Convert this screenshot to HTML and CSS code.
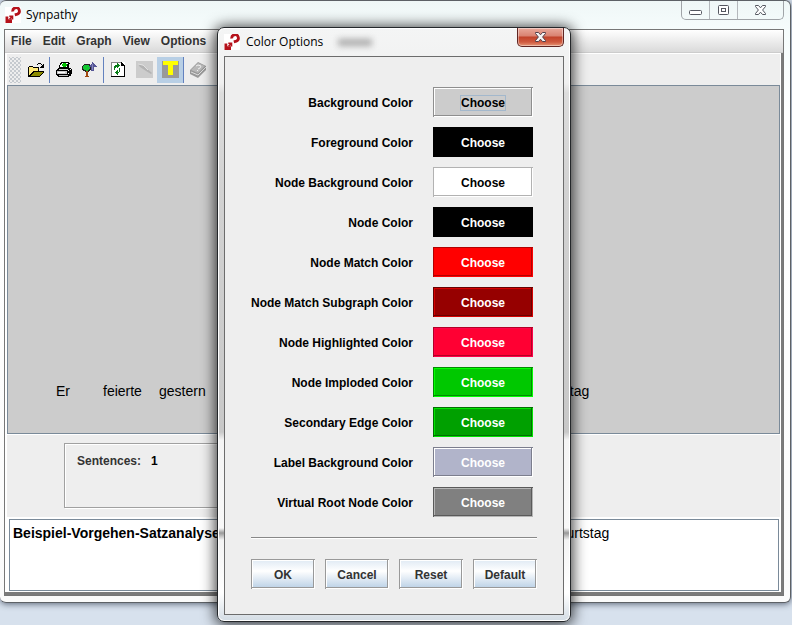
FILE: index.html
```html
<!DOCTYPE html>
<html lang="en">
<head>
<meta charset="utf-8">
<title>Synpathy</title>
<link rel="stylesheet" href="styles.css">
</head>
<body>
<svg class="defs" width="0" height="0" aria-hidden="true">
  <symbol id="logo" viewBox="0 0 16 16">
    <rect width="16" height="16" fill="#fff"/>
    <path d="M7.800 4.500 A3.300 3.300 0 1 1 12.300 7.100 L9.800 7.800" fill="none" stroke="#b5121b" stroke-width="2.800"/>
    <path d="M0.500 9.500h2.800v2.800h3.700v3.700H0.500z" fill="#b5121b"/>
    <path d="M4.300 8.500h4v4h-1.500v-1.300l-1.600 1.600-1.200-1.200 1.600-1.600h-1.300z" fill="#b5121b"/>
  </symbol>
</svg>
<div class="desktop">
  <main class="window">
    <header class="titlebar">
      <svg class="logo" width="16" height="16" aria-hidden="true"><use href="#logo"/></svg>
      <h1 class="title">Synpathy</h1>
      <div class="controls">
        <button class="control" type="button" aria-label="Minimize"><svg width="13" height="12"><rect x="0.500" y="6.500" width="12" height="4" rx="1" fill="#fff" stroke="#53565f"/></svg></button>
        <button class="control" type="button" aria-label="Maximize"><svg width="13" height="12"><rect x="1.500" y="1.500" width="10" height="9" rx="1" fill="#fff" stroke="#53565f"/><rect x="4.500" y="4.500" width="4" height="3" fill="#fff" stroke="#53565f"/></svg></button>
        <button class="control control-close" type="button" aria-label="Close"><svg width="13" height="12"><path d="M1.500 1.500h3l2 2.300 2-2.300h3v1L8.600 6l2.900 3.500v1h-3l-2-2.300-2 2.300h-3v-1L4.400 6 1.500 2.500z" fill="#fff" stroke="#53565f"/></svg></button>
      </div>
    </header>
    <div class="frame">
      <nav class="menubar">
        <button type="button">File</button>
        <button type="button">Edit</button>
        <button type="button">Graph</button>
        <button type="button">View</button>
        <button type="button">Options</button>
      </nav>
      <div class="client">
        <div class="toolbar">
          <span class="grip"></span>
          <button class="tool" type="button" aria-label="Open">
            <svg width="18" height="16" shape-rendering="crispEdges">
              <path d="M1 15V5h1V4h4v1h6v4h5v1l-5 5z" fill="#000"/>
              <path d="M2 13V5h4v1h5v3H6L3 13z" fill="#ffe97a"/>
              <path d="M7 10h9l-4 4H3z" fill="#8b8b00"/>
              <path d="M10 3V2h1V1h3v1h1v1h1V2h1v4h-4V5h1V4h1V3h-1V2h-3v1z" fill="#000"/>
            </svg>
          </button>
          <span class="divider"></span>
          <button class="tool" type="button" aria-label="Print">
            <svg width="16" height="16" shape-rendering="crispEdges">
              <path d="M5 0h8v1h1v1h-1v4h2v1h1v5h-1v2h-2v1H2v-1H1v-1H0V8h1V7h1V6h1V3h1V1h1z" fill="#000"/>
              <path d="M6 1h6v1h-1v3H4V3h1V2h1z" fill="#fff"/>
              <path d="M7 1h3v1h1v2h-1v1H7V4H6V2h1z" fill="#00c000"/>
              <path d="M3 7h9v1H3zM1 9h10v3H1z" fill="#ccc"/>
              <path d="M2 10h7v1H2zM12 8h1v1h-1zM14 7h1v1h-1zM12 11h1v1h-1z" fill="#fff"/>
              <path d="M3 13h9v1H3z" fill="#b8b8b8"/>
            </svg>
          </button>
          <button class="tool" type="button" aria-label="Graph root">
            <svg width="16" height="16" shape-rendering="crispEdges">
              <path d="M2 2h6v1h1v5H8v1H7v1H3V9H1V8H0V4h1V3h1z" fill="#222"/>
              <path d="M2 3h5v1h1v3H7v1H6v1H4V8H2V7H1V4h1z" fill="#14c832"/>
              <path d="M4 9h2v5h1v1H3v-1h1z" fill="#a0470f"/>
              <path d="M10 0h1v1h1v1h1v1h1v1h1v1h-3v4H9V5H7V4h1V3h1V2h1z" fill="#555596"/>
              <path d="M10 2h1v6h-1z" fill="#8787bb"/>
            </svg>
          </button>
          <span class="divider"></span>
          <button class="tool" type="button" aria-label="Refresh">
            <svg width="16" height="16" shape-rendering="crispEdges">
              <rect x="1" y="0" width="14" height="15" fill="#fff"/>
              <path d="M1 0h10v1H2v13H1z" fill="#888"/>
              <path d="M1 14h13V3h1v12H1zM11 0h1v1h1v1h1v2h-3z" fill="#000"/>
              <path d="M4 8V4h1V3h2V1h1v1h1v1h1v1H9v1H8v1H7V5H6v1H5v2zM10 6v4H9v1H8v2H7v-1H6v-1H5v-1h1V9h1V8h1v2h1V8h0V6z" fill="#087d17"/>
            </svg>
          </button>
          <button class="tool" type="button" aria-label="Edit node" disabled>
            <svg width="17" height="17"><rect width="17" height="17" fill="#ccc"/><path d="M2 3l6 2 8 7-1 1-5-3-6-4z" fill="#b3b3b3"/><path d="M2 3l5 1 5 5" fill="none" stroke="#e0e0e0"/></svg>
          </button>
          <button class="tool tool-on" type="button" aria-label="Text" aria-pressed="true">
            <svg width="17" height="17"><rect width="17" height="17" fill="#999"/><path d="M1 0h15v4h-5v10H6V4H1z" fill="#ff0"/></svg>
          </button>
          <span class="divider"></span>
          <button class="tool" type="button" aria-label="Help" disabled>
            <svg width="18" height="16"><path d="M1 8l8-8 8 4v4l-8 8-8-4z" fill="#999"/><path d="M2 8l7-7 7 3-7 7z" fill="#b8b8b8"/><path d="M2 10l7 3 8-8" fill="none" stroke="#ddd"/><path d="M7 4l2-1 3 1-1 2-2 1M8 8.500h1" fill="none" stroke="#eee"/></svg>
          </button>
        </div>
        <section class="graph">
          <span>Er</span><span>feierte</span><span>gestern</span><span>Geburtstag</span>
        </section>
        <section class="info">
          <dl class="counter"><dt>Sentences:</dt><dd>1</dd></dl>
        </section>
        <section class="sentence">
          <strong>Beispiel-Vorgehen-Satzanalyse</strong><span>Geburtstag</span>
        </section>
      </div>
    </div>
  </main>
</div>

<div class="dialog" role="dialog" aria-labelledby="dialog-title">
  <header class="dialog-titlebar">
    <svg class="logo" width="16" height="16" aria-hidden="true"><use href="#logo"/></svg>
    <h2 class="title" id="dialog-title">Color Options</h2>
    <span class="haze"></span>
    <button class="dialog-close" type="button" aria-label="Close"><svg width="13" height="12"><path d="M1.500 1.500h3l2 2.300 2-2.300h3v1L8.600 6l2.900 3.500v1h-3l-2-2.300-2 2.300h-3v-1L4.400 6 1.500 2.500z" fill="#f4f4f4" stroke="#53404b"/></svg></button>
  </header>
  <form class="options">
    <div class="colors">
      <label for="c1">Background Color</label><button id="c1" class="swatch c-background" type="button"><span>Choose</span></button>
      <label for="c2">Foreground Color</label><button id="c2" class="swatch c-black" type="button">Choose</button>
      <label for="c3">Node Background Color</label><button id="c3" class="swatch c-white" type="button">Choose</button>
      <label for="c4">Node Color</label><button id="c4" class="swatch c-black" type="button">Choose</button>
      <label for="c5">Node Match Color</label><button id="c5" class="swatch c-match" type="button">Choose</button>
      <label for="c6">Node Match Subgraph Color</label><button id="c6" class="swatch c-subgraph" type="button">Choose</button>
      <label for="c7">Node Highlighted Color</label><button id="c7" class="swatch c-highlight" type="button">Choose</button>
      <label for="c8">Node Imploded Color</label><button id="c8" class="swatch c-imploded" type="button">Choose</button>
      <label for="c9">Secondary Edge Color</label><button id="c9" class="swatch c-edge" type="button">Choose</button>
      <label for="c10">Label Background Color</label><button id="c10" class="swatch c-label" type="button">Choose</button>
      <label for="c11">Virtual Root Node Color</label><button id="c11" class="swatch c-root" type="button">Choose</button>
    </div>
    <hr class="rule">
    <div class="actions">
      <button class="action" type="button">OK</button>
      <button class="action" type="button">Cancel</button>
      <button class="action" type="button">Reset</button>
      <button class="action" type="button">Default</button>
    </div>
  </form>
</div>
</body>
</html>
```
FILE: styles.css
```css
* { box-sizing: border-box; }

body {
  margin: 0;
  background: #d7e1ed;
  color: #000;
  font: bold 12px/16px "Liberation Sans", Arial, sans-serif;
}

button {
  margin: 0;
  padding: 0;
  border: 0;
  background: none;
  color: inherit;
  font: inherit;
}

svg { display: block; }
.defs { position: absolute; }

.desktop {
  display: flex;
  height: 100vh;
  min-height: 320px;
  padding: 0 1px 22px 0;
  overflow: hidden;
}

.window {
  flex: 1;
  display: flex;
  flex-direction: column;
  min-width: 0;
  padding: 0 6px 6px 4px;
  border: solid #5d6166;
  border-width: 1px 1px 1px 0;
  border-radius: 6px;
  background: linear-gradient(#eff7f7, #f6fcfc 30px, #fff 120px, #fbfbfb);
  box-shadow: 0 1px 6px rgba(40, 50, 70, 0.7);
}

.titlebar {
  display: flex;
  align-items: center;
  height: 28px;
  padding-left: 1px;
}

.title {
  margin: 0 0 0 5px;
  font: 12px/16px "Open Sans", "Noto Sans", sans-serif;
}

.controls {
  display: flex;
  align-self: flex-start;
  height: 19px;
  margin-left: auto;
  border: 1px solid #a0a4a8;
  border-top: 0;
  border-radius: 0 0 5px 5px;
}

.control {
  display: grid;
  place-items: center;
  width: 28px;
  border-right: 1px solid #b4b8bc;
}

.control-close {
  width: 45px;
  border-right: 0;
}

.frame {
  flex: 1;
  display: flex;
  flex-direction: column;
  min-height: 0;
  border: 1px solid #777;
}

.menubar {
  display: flex;
  gap: 11px;
  height: 23px;
  padding: 0 6px;
  border-bottom: 1px solid #ccc;
  background: linear-gradient(#fff, #dadada);
  color: #333;
}

.client {
  flex: 1;
  display: flex;
  flex-direction: column;
  min-height: 0;
  padding: 0 1px 1px 2px;
  border: solid #7b7b7b;
  border-width: 0 2px 3px 0;
  background: #fff;
}

.toolbar {
  display: flex;
  align-items: center;
  height: 32px;
  border-top: 1px solid #fff;
  background: #eee;
}

.grip {
  width: 12px;
  height: 26px;
  margin-left: 2px;
  background:
    radial-gradient(circle, #a8b0b8 0.5px, transparent 1px) 0 0 / 4px 4px,
    radial-gradient(circle, #a8b0b8 0.5px, transparent 1px) 2px 2px / 4px 4px;
}

.grip + .tool { margin-left: 2px; }

.tool {
  display: grid;
  place-items: center;
  width: 26px;
  height: 26px;
}

.tool-on { background: #b8cfe5; }

.divider {
  width: 1px;
  height: 26px;
  background: #6382bf;
}

.divider + .tool { margin-left: 1px; }

.graph {
  flex: 1;
  display: grid;
  grid-template-columns: 47px 56px 361px auto;
  align-items: end;
  min-height: 60px;
  padding: 0 48px 34px;
  border: 1px solid #7a8a99;
  background: #ccc;
  font-size: 14px;
  font-weight: normal;
}

.info {
  padding: 8px 57px 9px;
  border-top: 1px solid #fff;
  background: #eee;
}

.counter {
  display: flex;
  gap: 10px;
  width: 300px;
  height: 65px;
  margin: 0;
  padding: 9px 12px;
  border: 1px solid #a0a0a0;
  box-shadow: inset 1px 1px #fff, 1px 1px #fff;
}

.counter dt { color: #333; }
.counter dd { margin: 0; }

.sentence {
  display: grid;
  grid-template-columns: 527px auto;
  height: 72px;
  margin: 2px 1px 0 2px;
  padding: 5px 3px;
  border: 1px solid #7a8a99;
  font-size: 14px;
}

.sentence span { font-weight: normal; }

/* The dialog floats over the main window. */
.dialog {
  position: absolute;
  top: 27px;
  left: 217px;
  width: 354px;
  padding: 0 6px 6px;
  border: 1px solid #24272a;
  border-radius: 7px;
  background: linear-gradient(#f4f5f5, #f0f0f0 55px, #ddd 65px, #d2d2d2 160px, #c8c8c8 404px, #f4f4f4 412px, #f8f8f8 500px, #999 505px, #f4f4f4 512px, #fff 565px, #d3dce4);
  box-shadow: inset 0 0 0 1px #fff, 0 1px 14px 2px rgba(0, 0, 0, 0.75);
}

.dialog-titlebar {
  display: flex;
  align-items: center;
  height: 28px;
}

.dialog-titlebar .title { margin-left: 6px; }

.haze {
  width: 34px;
  height: 7px;
  margin-left: 15px;
  background: #aaa;
  filter: blur(3px);
}

.dialog-close {
  display: grid;
  place-items: center;
  align-self: flex-start;
  width: 47px;
  height: 19px;
  margin-left: auto;
  border: 1px solid #5f2522;
  border-top: 0;
  border-radius: 0 0 5px 5px;
  background: linear-gradient(#e9a99b, #d98271 8px, #c1422a 9px, #cf5a3f 14px, #e69877);
  box-shadow: inset 0 0 0 1px rgba(255, 255, 255, 0.4);
}

.options {
  padding: 30px 26px 25px;
  border: 1px solid #6c6c6c;
  background: #eee;
}

.colors {
  display: grid;
  grid-template-columns: 1fr 100px;
  gap: 10px 20px;
  align-items: center;
  padding-right: 4px;
  text-align: right;
}

.colors label { padding-top: 2px; }

.swatch,
.action {
  --dark: #999;
  --light: #fff;
  height: 30px;
  padding-top: 2px;
  text-align: center;
  box-shadow:
    inset 1px 1px var(--dark),
    inset -1px -1px var(--light),
    inset -2px -2px var(--dark),
    inset 2px 2px var(--light);
}

.swatch { color: #fff; }
.swatch span { outline: 1px solid #a3b8cc; }

.c-background { --dark: #8e8e8e; background: #ccc; color: #000; }
.c-black { --dark: #000; --light: #000; background: #000; }
.c-white { --dark: #b2b2b2; background: #fff; color: #000; }
.c-match { --dark: #b20000; --light: #f00; background: #f00; }
.c-subgraph { --dark: #690000; --light: #d60000; background: #960000; }
.c-highlight { --dark: #b20024; --light: #ff0048; background: #ff0033; }
.c-imploded { --dark: #008c00; --light: #00ff00; background: #00c800; }
.c-edge { --dark: #007000; --light: #00e400; background: #00a000; }
.c-label { --dark: #7c7e8d; background: #b1b4ca; }
.c-root { --dark: #5a5a5a; --light: #b6b6b6; background: #808080; }

.rule {
  height: 2px;
  margin: 20px 0;
  border: 0;
  border-top: 1px solid #888;
  border-bottom: 1px solid #fff;
}

.actions {
  display: grid;
  grid-template-columns: repeat(4, 1fr);
  gap: 10px;
}

.action {
  background: linear-gradient(#dde8f3, #fff 40%, #b8cfe5);
  color: #333;
}
```
